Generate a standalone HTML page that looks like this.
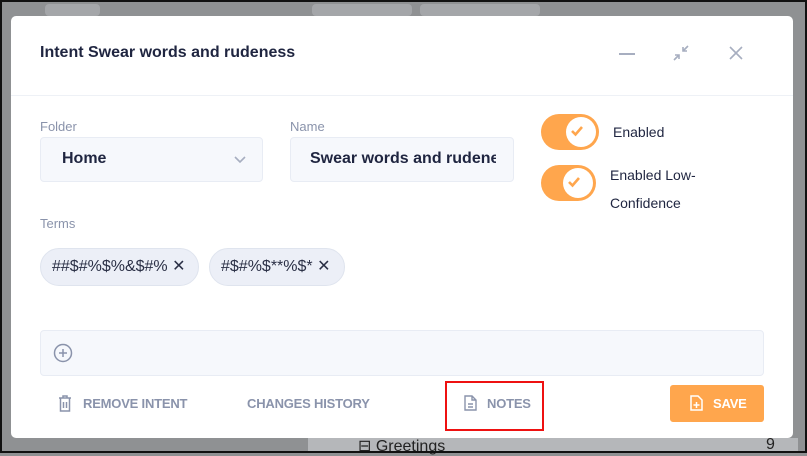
<!DOCTYPE html>
<html><head><meta charset="utf-8"><style>
*{margin:0;padding:0;box-sizing:border-box}
body{width:807px;height:453px;overflow:hidden;background:#8f9193;font-family:"Liberation Sans",sans-serif;position:relative}
.a{position:absolute}
.dlg{left:11px;top:16px;width:782px;height:422px;background:#fff;border-radius:5px}
.t{color:#1f2540}
.lbl{font-size:13px;color:#8a93ab}
.inp{background:#f6f8fc;border:1px solid #e8ecf4;border-radius:4px}
.chip{background:#eceff7;border:1px solid #dfe4ee;border-radius:19px;height:38px;font-size:16px;color:#2a2f45;line-height:36px;padding-left:11px;white-space:nowrap}
.tg{width:58px;height:36px;border-radius:18px;background:#ffa64d}
.tg i{position:absolute;right:3px;top:3px;width:30px;height:30px;border-radius:50%;background:#fff}
.btn{font-size:13px;color:#8a93ab;font-weight:bold;letter-spacing:-.2px}
</style></head><body>
<div class="a" style="left:45px;top:4px;width:55px;height:12px;background:#a4a6a9;border-radius:4px"></div>
<div class="a" style="left:312px;top:4px;width:100px;height:12px;background:#a4a6a9;border-radius:4px"></div>
<div class="a" style="left:420px;top:4px;width:120px;height:12px;background:#a4a6a9;border-radius:4px"></div>
<div class="a" style="left:308px;top:438px;width:490px;height:15px;background:#b5b7ba"></div>
<div class="a" style="left:358px;top:436px;font-size:16px;color:#222">⊟ Greetings</div>
<div class="a" style="left:766px;top:436px;font-size:16px;color:#222">9</div>
<div class="a dlg"></div>
<div class="a t" style="left:40px;top:44px;font-size:16px;font-weight:bold">Intent Swear words and rudeness</div>
<div class="a" style="left:619px;top:53px;width:16px;height:2px;background:#a7aec0"></div>
<svg class="a" style="left:672px;top:44px" width="18" height="18" viewBox="0 0 18 18" fill="none" stroke="#a7aec0" stroke-width="1.6"><path d="M16 2l-5 5M11 3v4h4M2 16l5-5M3 11h4v4"/></svg>
<svg class="a" style="left:729px;top:46px" width="14" height="14" viewBox="0 0 14 14" stroke="#a7aec0" stroke-width="1.6"><path d="M1 1l12 12M13 1L1 13"/></svg>
<div class="a" style="left:11px;top:95px;width:782px;height:1px;background:#eef1f6"></div>
<div class="a lbl" style="left:40px;top:119px">Folder</div>
<div class="a inp" style="left:40px;top:137px;width:223px;height:45px"></div>
<div class="a t" style="left:62px;top:150px;font-size:16px;font-weight:bold">Home</div>
<svg class="a" style="left:234px;top:156px" width="12" height="8" viewBox="0 0 12 8" fill="none" stroke="#a7aec0" stroke-width="1.6"><path d="M1 1l5 5 5-5"/></svg>
<div class="a lbl" style="left:290px;top:119px">Name</div>
<div class="a inp" style="left:290px;top:137px;width:224px;height:45px"></div>
<div class="a t" style="left:310px;top:150px;font-size:16px;font-weight:bold;width:186px;overflow:hidden;white-space:nowrap">Swear words and rudeness</div>
<div class="a tg" style="left:541px;top:114px"><i></i></div>
<svg class="a" style="left:569px;top:124px" width="16" height="14" viewBox="0 0 16 14" fill="none" stroke="#ffa64d" stroke-width="2.6"><path d="M3 7l3.5 3.5L13 3"/></svg>
<div class="a t" style="left:613px;top:124px;font-size:14px">Enabled</div>
<div class="a tg" style="left:541px;top:165px;width:55px"><i></i></div>
<svg class="a" style="left:566px;top:175px" width="16" height="14" viewBox="0 0 16 14" fill="none" stroke="#ffa64d" stroke-width="2.6"><path d="M3 7l3.5 3.5L13 3"/></svg>
<div class="a t" style="left:610px;top:161px;font-size:14px;line-height:28px">Enabled Low-<br>Confidence</div>
<div class="a lbl" style="left:40px;top:216px">Terms</div>
<div class="a chip" style="left:40px;top:248px;width:159px">##$#%$%&amp;$#% ✕</div>
<div class="a chip" style="left:209px;top:248px;width:136px">#$#%$**%$* ✕</div>
<div class="a inp" style="left:40px;top:330px;width:724px;height:46px"></div>
<svg class="a" style="left:53px;top:343px" width="20" height="20" viewBox="0 0 20 20" fill="none" stroke="#8a93ab" stroke-width="1.5"><circle cx="10" cy="10" r="8.5"/><path d="M10 6v8M6 10h8"/></svg>
<svg class="a" style="left:58px;top:395px" width="14" height="17" viewBox="0 0 14 17" fill="none" stroke="#8a93ab" stroke-width="1.5"><path d="M1 3h12M5 3V1h4v2M2.5 3v13h9V3M5.5 7v6M8.5 7v6"/></svg>
<div class="a btn" style="left:83px;top:396px">REMOVE INTENT</div>
<div class="a btn" style="left:247px;top:396px">CHANGES HISTORY</div>
<div class="a" style="left:445px;top:381px;width:99px;height:50px;border:2px solid #ee1111"></div>
<svg class="a" style="left:464px;top:395px" width="13" height="16" viewBox="0 0 13 16" fill="none" stroke="#8a93ab" stroke-width="1.4"><path d="M1 1h7l4 4v10H1zM8 1v4h4M4 9h5M4 12h5"/></svg>
<div class="a btn" style="left:487px;top:396px">NOTES</div>
<div class="a" style="left:670px;top:385px;width:94px;height:37px;background:#ffa64d;border-radius:3px"></div>
<svg class="a" style="left:690px;top:395px" width="13" height="16" viewBox="0 0 13 16" fill="none" stroke="#fff" stroke-width="1.5"><path d="M1 1h7l4 4v10H1zM6.5 7v6M3.5 10h6"/></svg>
<div class="a btn" style="left:713px;top:396px;color:#fff">SAVE</div>
<div class="a" style="left:0;top:0;width:807px;height:453px;border:2px solid #111"></div>
</body></html>
